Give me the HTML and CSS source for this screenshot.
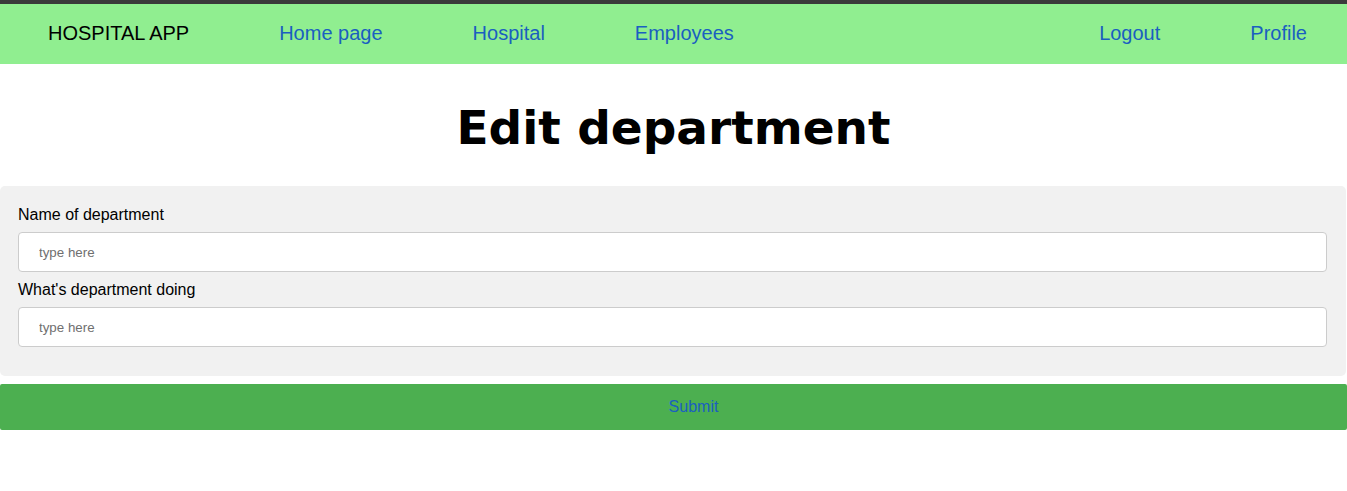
FILE: index.html
```html
<!DOCTYPE html>
<html>
<head>
<meta charset="utf-8">
<link rel="stylesheet" href="styles.css">
</head>
<body>
<div class="topline"></div>
<nav class="navbar">
  <div class="nav-left">
    <span class="brand">HOSPITAL APP</span>
    <a class="nav-link" href="#">Home page</a>
    <a class="nav-link" href="#">Hospital</a>
    <a class="nav-link" href="#">Employees</a>
  </div>
  <div class="nav-right">
    <a class="nav-link" href="#">Logout</a>
    <a class="nav-link" href="#">Profile</a>
  </div>
</nav>
<h1 class="title">Edit department</h1>
<form class="form">
  <div class="fields">
    <label class="label">Name of department</label>
    <input class="input" type="text" placeholder="type here">
    <label class="label">What's department doing</label>
    <input class="input" type="text" placeholder="type here">
  </div>
  <button class="submit" type="button">Submit</button>
</form>
</body>
</html>
```
FILE: styles.css
```css
html, body {
  margin: 0;
  padding: 0;
  background: #ffffff;
  font-family: "Liberation Sans", Arial, sans-serif;
}
.topline {
  height: 4px;
  background: #3a3a3a;
}
.navbar {
  box-sizing: border-box;
  height: 60px;
  background: #90ee90;
  display: flex;
  align-items: center;
  justify-content: space-between;
  padding: 0 40px 2px 48px;
  font-size: 20px;
}
.nav-left, .nav-right {
  display: flex;
  align-items: center;
  gap: 90px;
}
.brand {
  color: #000;
}
.nav-link {
  color: #1a5fc0;
  text-decoration: none;
}
.title {
  margin: 0;
  padding: 33px 0 28px;
  text-align: center;
  font-family: "DejaVu Sans", Verdana, sans-serif;
  font-weight: bold;
  font-size: 47px;
  line-height: 61px;
  color: #000;
}
.form {
  display: flex;
  flex-direction: column;
  gap: 8px;
}
.fields {
  background: #f1f1f1;
  border-radius: 5px;
  margin-right: 1px;
  padding: 20px 19px 20px 18px;
  display: flex;
  flex-direction: column;
}
.label {
  font-size: 16px;
  line-height: 18px;
  color: #000;
}
.input {
  box-sizing: border-box;
  height: 40px;
  margin: 8px 0 9px;
  border: 1px solid #cccccc;
  border-radius: 4px;
  background: #fff;
  padding: 0 20px;
  font-family: "Liberation Sans", Arial, sans-serif;
  font-size: 13.33px;
}
.input::placeholder {
  color: #6f6f6f;
}
.submit {
  box-sizing: border-box;
  height: 46px;
  width: 100%;
  border: none;
  border-radius: 2px;
  background: #4caf50;
  color: #1a5fc0;
  font-family: "Liberation Sans", Arial, sans-serif;
  font-size: 16px;
  padding: 0 0 0 40px;
  text-align: center;
}
```
